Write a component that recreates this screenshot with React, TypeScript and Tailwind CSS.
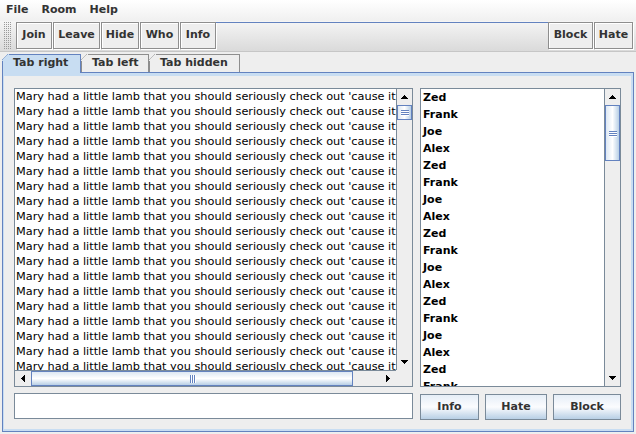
const LINE = "Mary had a little lamb that you should seriously check out 'cause it's really very good";
const NAMES = ["Zed", "Frank", "Joe", "Alex"];
const PEOPLE = Array.from({ length: 18 }, (_, i) => NAMES[i % 4]);

type Dir = "up" | "down" | "left" | "right";

// metal style arrow, drawn as pixel rows so it stays crisp
function Arrow({ dir }: { dir: Dir }) {
  const rows = [
    [3, 1],
    [2, 3],
    [1, 5],
    [0, 7],
  ];
  const vertical = dir === "up" || dir === "down";
  return (
    <svg width={vertical ? 7 : 4} height={vertical ? 4 : 7} shapeRendering="crispEdges">
      {rows.map(([start, len], i) => {
        const r = dir === "up" || dir === "left" ? i : 3 - i;
        return vertical ? (
          <rect key={i} x={start} y={r} width={len} height={1} fill="#000" />
        ) : (
          <rect key={i} x={r} y={start} width={1} height={len} fill="#000" />
        );
      })}
    </svg>
  );
}

function ArrowBtn({ dir, className }: { dir: Dir; className: string }) {
  return (
    <div className={`flex shrink-0 items-center justify-center bg-[#eeeeee] ${className}`}>
      <Arrow dir={dir} />
    </div>
  );
}

function VScroll({ thumb }: { thumb: string }) {
  return (
    <div className="flex w-[16px] shrink-0 flex-col border-l border-[#7a8a99] bg-[#eeeeee]">
      <ArrowBtn dir="up" className="h-[16px] w-full" />
      <div className="flex flex-1 flex-col">
        <div
          className={`flex ${thumb} flex-col items-center justify-center gap-[1px] border border-[#6382bf] bg-linear-to-r from-[#dde8f3] via-white to-[#b8cfe5]`}
        >
          <div className="h-px w-[8px] bg-[#6382bf] shadow-[0_1px_0_#fff]" />
          <div className="h-px w-[8px] bg-[#6382bf] shadow-[0_1px_0_#fff]" />
          <div className="h-px w-[8px] bg-[#6382bf] shadow-[0_1px_0_#fff]" />
        </div>
      </div>
      <ArrowBtn dir="down" className="h-[16px] w-full" />
    </div>
  );
}

function HScroll() {
  return (
    <div className="flex h-[16px] flex-1 border-t border-[#7a8a99] bg-[#eeeeee]">
      <ArrowBtn dir="left" className="h-full w-[16px]" />
      <div className="flex flex-1">
        <div className="flex w-[322px] items-center justify-center gap-[1px] border border-[#6382bf] bg-linear-to-b from-[#dde8f3] via-white to-[#b8cfe5]">
          <div className="h-[8px] w-px bg-[#6382bf] shadow-[1px_0_0_#fff]" />
          <div className="h-[8px] w-px bg-[#6382bf] shadow-[1px_0_0_#fff]" />
          <div className="h-[8px] w-px bg-[#6382bf] shadow-[1px_0_0_#fff]" />
        </div>
      </div>
      <ArrowBtn dir="right" className="h-full w-[16px]" />
    </div>
  );
}

function ToolBtn({ label, w, last }: { label: string; w: string; last?: boolean }) {
  return (
    <div
      className={`flex h-[27px] ${w} ${last ? "" : "mr-[1px]"} items-center justify-center border border-[#8e8e8e] bg-[#eeeeee] font-bold shadow-[inset_1px_1px_0_#fff,1px_1px_0_#fff]`}
    >
      {label}
    </div>
  );
}

function Tab({ label, w, selected }: { label: string; w: string; selected?: boolean }) {
  const edge = selected ? "#6382bf" : "#8e8e8e";
  return (
    <div
      className={`relative flex ${w} items-center pl-[10px] font-bold [clip-path:polygon(6px_0,100%_0,100%_100%,0_100%,0_6px)] ${
        selected
          ? "z-10 -mb-px h-[19px] border-x border-t border-[#6382bf] bg-[#c8ddf2] pb-px"
          : "h-[18px] border-t border-r border-l border-[#8e8e8e] bg-[#eeeeee]"
      }`}
    >
      <svg className="absolute -left-px -top-px" width="7" height="7" shapeRendering="crispEdges">
        <rect x="0" y="0" width="7" height="7" fill={selected ? "#c8ddf2" : "#eeeeee"} />
        <path d="M0 6 L6 0" stroke={edge} strokeWidth="1" />
      </svg>
      {label}
    </div>
  );
}

function ActionBtn({ label, w }: { label: string; w: string }) {
  return (
    <div
      className={`flex h-[26px] ${w} items-center justify-center border border-[#7a8a99] bg-linear-to-b from-[#e6eef7] via-[#fbfcfe] to-[#b8cfe5] font-bold`}
    >
      {label}
    </div>
  );
}

export default function App() {
  return (
    <div className="h-[434px] w-[636px] overflow-hidden bg-[#eeeeee] font-['DejaVu_Sans',sans-serif] text-[11px] text-[#333333]">
      {/* menu bar */}
      <div className="flex h-[21px] items-center gap-[13px] bg-linear-to-b from-white to-[#f0f0f0] pl-[6px] font-bold">
        <span>File</span>
        <span>Room</span>
        <span>Help</span>
      </div>

      {/* toolbar */}
      <div className="flex h-[31px] items-start border-b border-[#c6c6c6] bg-linear-to-b from-[#f5f5f5] to-[#dadada] pt-[1px] pl-[3px] pr-[3px]">
        <div className="h-[27px] w-[9px] bg-[conic-gradient(#9a9a9a_25%,transparent_0)] bg-[length:2px_2px]" />
        <div className="ml-[4px] flex">
          <ToolBtn label="Join" w="w-[36px]" />
          <ToolBtn label="Leave" w="w-[47px]" />
          <ToolBtn label="Hide" w="w-[38px]" />
          <ToolBtn label="Who" w="w-[39px]" />
          <ToolBtn label="Info" w="w-[36px]" last />
        </div>
        <div className="h-[27px] flex-1 border-t border-[#6382bf]" />
        <ToolBtn label="Block" w="w-[45px]" />
        <ToolBtn label="Hate" w="w-[39px]" last />
      </div>

      {/* tabs */}
      <div className="mt-[2px] flex h-[18px] items-start pl-[2px]">
        <Tab label="Tab right" w="w-[79px]" selected />
        <Tab label="Tab left" w="w-[68px]" />
        <Tab label="Tab hidden" w="w-[91px]" />
      </div>

      {/* tab content */}
      <div className="ml-[2px] w-[632px] border border-[#6382bf]">
        <div className="border-t-[3px] border-r-2 border-b-2 border-l border-[#c8ddf2]">
          <div className="flex flex-col px-[10px] pt-[12px] pb-[9px]">
            <div className="flex h-[299px] gap-[7px]">
              {/* text area */}
              <div className="flex w-[399px] flex-col border border-[#7a8a99] bg-white">
                <div className="flex min-h-0 flex-1">
                  <div className="flex-1 overflow-hidden pl-[1px] text-[11.3px] leading-[15px] whitespace-nowrap text-black">
                    {Array.from({ length: 19 }).map((_, i) => (
                      <div key={i}>{LINE}</div>
                    ))}
                  </div>
                  <VScroll thumb="h-[15px]" />
                </div>
                <div className="flex">
                  <HScroll />
                  <div className="h-[16px] w-[16px] bg-[#eeeeee]" />
                </div>
              </div>

              {/* user list */}
              <div className="flex w-[201px] border border-[#7a8a99] bg-white">
                <div className="flex-1 overflow-hidden pl-[2px] leading-[17px] font-bold text-black">
                  {PEOPLE.map((p, i) => (
                    <div key={i}>{p}</div>
                  ))}
                </div>
                <VScroll thumb="h-[56px]" />
              </div>
            </div>

            <div className="mt-[6px] flex h-[27px] items-start">
              <div className="h-[26px] w-[399px] border border-[#7a8a99] bg-white" />
              <div className="mt-[1px] ml-[7px] flex gap-[6px]">
                <ActionBtn label="Info" w="w-[59px]" />
                <ActionBtn label="Hate" w="w-[62px]" />
                <ActionBtn label="Block" w="w-[68px]" />
              </div>
            </div>
          </div>
        </div>
      </div>
    </div>
  );
}
